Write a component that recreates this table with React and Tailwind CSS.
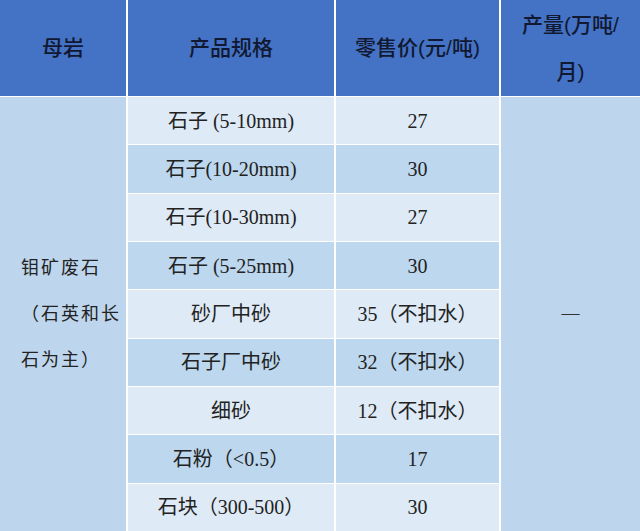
const rows = [
  { spec: "石子 (5-10mm)", price: "27" },
  { spec: "石子(10-20mm)", price: "30" },
  { spec: "石子(10-30mm)", price: "27" },
  { spec: "石子 (5-25mm)", price: "30" },
  { spec: "砂厂中砂", price: "35（不扣水）" },
  { spec: "石子厂中砂", price: "32（不扣水）" },
  { spec: "细砂", price: "12（不扣水）" },
  { spec: "石粉（<0.5）", price: "17" },
  { spec: "石块（300-500）", price: "30" },
];

const head =
  "bg-[#4472c4] flex items-center justify-center text-center text-[21px] font-medium text-[#111831] font-['Liberation_Sans','Noto_Sans_CJK_SC',sans-serif]";
const cell =
  "flex items-center justify-center text-[20px] text-[#222] font-['Liberation_Serif','Noto_Sans_CJK_SC',serif]";

export default function App() {
  return (
    <div className="w-[640px] h-[531px] bg-white overflow-hidden">
      <div className="grid h-full grid-cols-[126px_206px_163px_1fr] grid-rows-[96px_repeat(9,1fr)] gap-x-[2px] gap-y-[1px] bg-white">
        <div className={head}>母岩</div>
        <div className={head}>产品规格</div>
        <div className={head}>零售价(元/吨)</div>
        <div className={`${head} leading-[47px]`}>
          产量(万吨/
          <br />
          月)
        </div>

        <div className="row-start-2 row-span-9 col-start-1 bg-[#bed6ed] flex flex-col justify-center pl-[21px] text-[18px] leading-[46px] tracking-[2px] text-[#222] font-['Liberation_Serif','Noto_Sans_CJK_SC',serif]">
          <div>钼矿废石</div>
          <div>（石英和长</div>
          <div>石为主）</div>
        </div>

        <div className="row-start-2 row-span-9 col-start-4 bg-[#bed6ed] flex items-center justify-center text-[18px] text-[#333] font-['Liberation_Serif','Noto_Sans_CJK_SC',serif]">
          —
        </div>

        {rows.map((r, i) => {
          const bg = i % 2 === 0 ? "bg-[#deeaf6]" : "bg-[#bdd7ee]";
          return [
            <div key={"s" + i} className={`${bg} ${cell}`}>
              {r.spec}
            </div>,
            <div key={"p" + i} className={`${bg} ${cell}`}>
              {r.price}
            </div>,
          ];
        })}
      </div>
    </div>
  );
}
